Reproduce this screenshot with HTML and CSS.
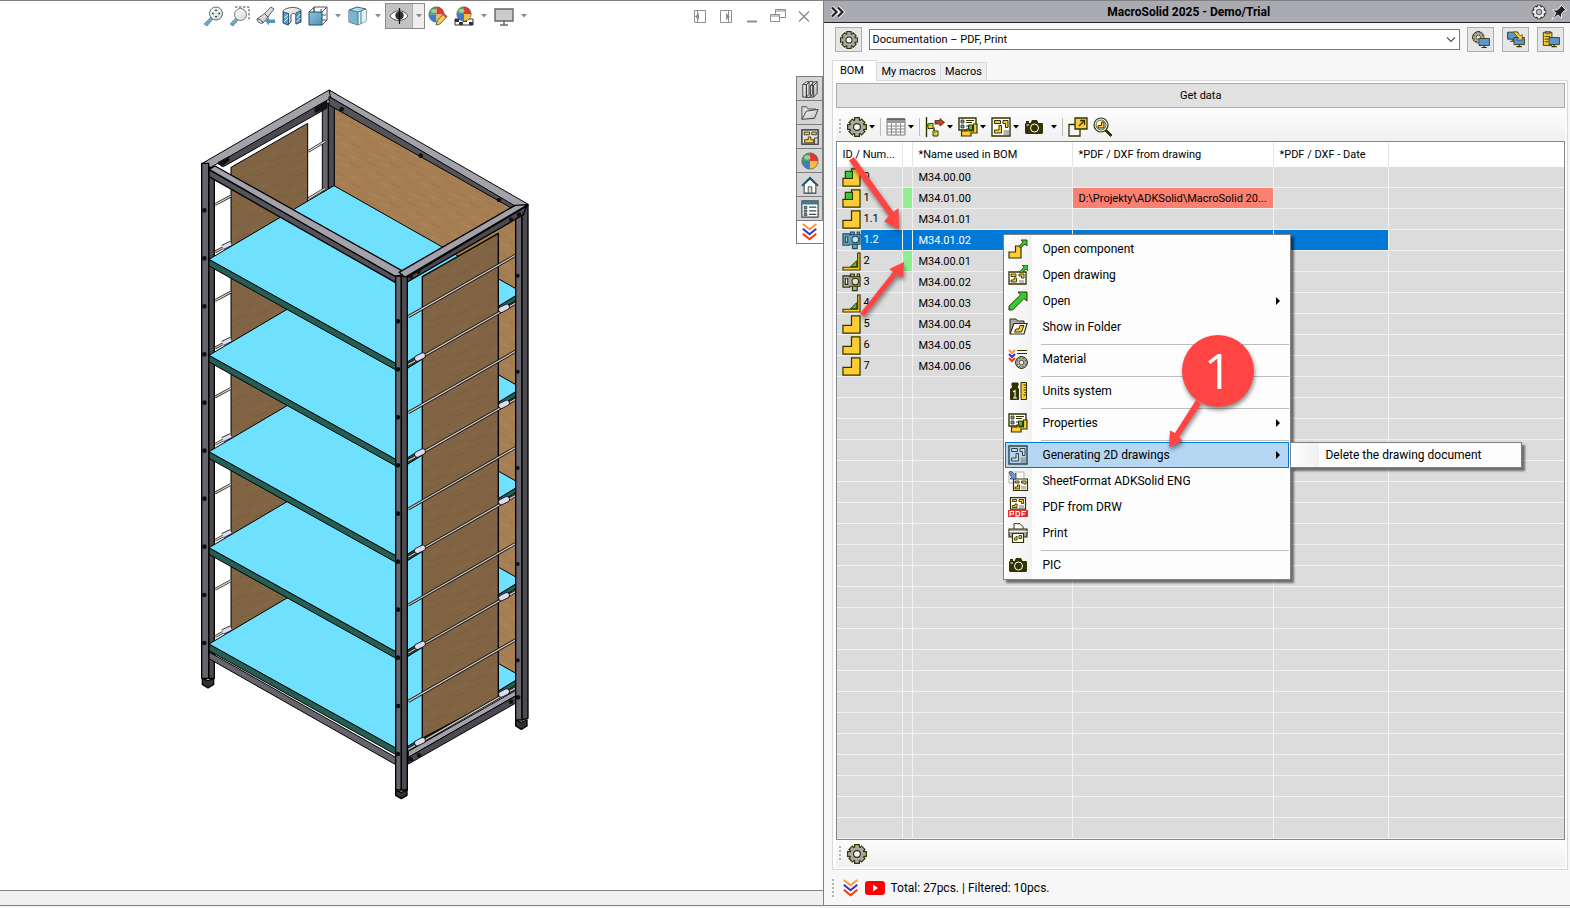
FILE: index.html
```html
<!DOCTYPE html>
<html lang="en">
<head>
<meta charset="utf-8">
<title>MacroSolid 2025 - Demo/Trial</title>
<link rel="stylesheet" href="styles.css">
</head>
<body>
<svg class="defs" aria-hidden="true">
  <defs>
    <linearGradient id="glass" x1="0" y1="0" x2="1" y2="1"><stop offset="0" stop-color="#fff"/><stop offset="1" stop-color="#c9d8de"/></linearGradient>
    <linearGradient id="steel" x1="0" y1="0" x2="1" y2="1"><stop offset="0" stop-color="#8fc3da"/><stop offset="1" stop-color="#4d94b5"/></linearGradient>
    <linearGradient id="sheet" x1="0" y1="0" x2="1" y2="1"><stop offset="0" stop-color="#fff"/><stop offset="1" stop-color="#b5b5b5"/></linearGradient>
    <symbol id="gear" viewBox="0 0 20 20">
      <g fill="#333300"><rect x="7" y="0" width="6" height="20"/><rect x="0" y="7" width="20" height="6"/><rect x="7" y="0.5" width="6" height="19" transform="rotate(45 10 10)"/><rect x="7" y="0.5" width="6" height="19" transform="rotate(-45 10 10)"/><circle cx="10" cy="10" r="7.8"/></g>
      <g fill="#a9a9a9"><rect x="8.2" y="1.2" width="3.6" height="17.6"/><rect x="1.2" y="8.2" width="17.6" height="3.6"/><rect x="8.2" y="1.7" width="3.6" height="16.6" transform="rotate(45 10 10)"/><rect x="8.2" y="1.7" width="3.6" height="16.6" transform="rotate(-45 10 10)"/><circle cx="10" cy="10" r="6.7"/></g>
      <circle cx="10" cy="10" r="3.4" fill="#f8f8f8" stroke="#333300" stroke-width="1.2"/>
    </symbol>
    <symbol id="part" viewBox="0 0 20 20"><path d="M10 1h9v18H1v-8h9z" fill="#fc3" stroke="#333300" stroke-width="1.3"/></symbol>
    <symbol id="asm" viewBox="0 0 20 20"><path d="M10 1h9v18H1v-8h9z" fill="#fc3" stroke="#333300" stroke-width="1.3"/><rect x="3.5" y="3.5" width="7.5" height="7.5" fill="#3c3" stroke="#333300" stroke-width="1.2"/></symbol>
    <symbol id="weld" viewBox="0 0 20 20"><path d="M9 15.500L15.500 9v6.500z" fill="#3c3" stroke="#333300"/><path d="M16.500 1H19v18H1v-3h15.500z" fill="#fc3" stroke="#333300" stroke-width="1.2"/></symbol>
    <symbol id="lib" viewBox="0 0 20 20"><g fill="#a9a9a9" stroke="#333300" stroke-width="1.2"><path d="M9 1h4v3H9zM16 1h2.500v3H16zM11 13h5v5.500h-5z"/><path d="M1 3h7v1h11v10H8v1H1z"/><path d="M3.500 6h2.500v6H3.500z" fill="#fff"/><circle cx="14" cy="9" r="3.500" fill="#ddd"/></g></symbol>
    <symbol id="libsel" viewBox="0 0 20 20"><g fill="#6aa0b4" stroke="#1d4f66" stroke-width="1.2"><path d="M9 1h4v3H9zM16 1h2.500v3H16zM11 13h5v5.500h-5z"/><path d="M1 3h7v1h11v10H8v1H1z"/><path d="M3.500 6h2.500v6H3.500z" fill="#bcd"/><circle cx="14" cy="9" r="3.500" fill="#cde"/></g></symbol>
    <symbol id="drawing" viewBox="0 0 20 20"><path d="M1 1h18v18H1z" fill="#fff" stroke="#333300" stroke-width="1.4"/><path d="M3.500 3.500h6v3h-6zM12 3.500h5v7h-2.500v-4H12zM8 8.500h2.500V16H3.500v-3H8z" fill="#fc3" stroke="#333300"/><path d="M12.500 13H18v5h-5.500z" fill="#b3b3b3"/></symbol>
    <symbol id="drawblue" viewBox="0 0 20 20"><path d="M1 1h18v18H1z" fill="#b5d7f3" stroke="#33443c" stroke-width="1.4"/><path d="M3.500 3.500h6v3h-6zM12 3.500h5v7h-2.500v-4H12zM8 8.500h2.500V16H3.500v-3H8z" fill="#c4dcec" stroke="#33443c"/><path d="M12.500 12.500H18V18h-5.500z" fill="#98a4b4"/></symbol>
    <symbol id="props" viewBox="0 0 20 20"><path d="M1 1h17v12H1z" fill="#fff" stroke="#333300" stroke-width="1.4"/><path d="M3 3h3v3H3zM3 8h3v3H3z" fill="#69c" stroke="#333300" stroke-width=".8"/><path d="M8 3.500h8M8 5.500h6M8 9h3" stroke="#333300"/><path d="M10.500 8h4v5h-4z" fill="#3c3" stroke="#333300"/><path d="M15.500 7H19v9h-6v3H3.500v-5H9v-2h2v2h4.500z" fill="#fc3" stroke="#333300" stroke-width="1.2"/></symbol>
    <symbol id="grid" viewBox="0 0 20 20"><path d="M1 2h18v16H1z" fill="#fff" stroke="#777"/><path d="M1 2h18v4H1z" fill="#999"/><path d="M1 2h18" stroke="#333"/><path d="M1 9h18M1 12h18M1 15h18M5.500 6v12M10 6v12M14.500 6v12" stroke="#888"/></symbol>
    <symbol id="tree" viewBox="0 0 20 20"><path d="M1.500 0v20M1.500 8.500H4M9 10.500v4" fill="none" stroke="#333300" stroke-width="1.4"/><path d="M3 6.500h5v5H3zM8 14h5v5H8z" fill="#fc3" stroke="#333300"/><path d="M3 6.500h2.500V9H3zM8 14h2.500v2.500H8z" fill="#3c3"/><path d="M10 3.500h5V1.500l4.500 4-4.500 3.500V7h-5z" fill="#d33" stroke="#333300" stroke-width=".8"/></symbol>
    <symbol id="camera" viewBox="0 0 20 20"><path d="M1.500 6h5l1.500-3h5l1.500 3h4l.5 1v9l-1 1H2l-1-1V7z" fill="#333300"/><path d="M2 4h3v2H2z" fill="#333300"/><circle cx="10.500" cy="11" r="4" fill="none" stroke="#fff"/><path d="M2.500 8h2.500" stroke="#fff"/></symbol>
    <symbol id="export" viewBox="0 0 20 20"><path d="M1 7.500h11V19H1z" fill="#f8f8f8" stroke="#333300" stroke-width="1.300"/><path d="M7 1h12v11H7z" fill="#fc3" stroke="#333300" stroke-width="1.300"/><path d="M11 9l5-5M12 3.500h4.500V8" fill="none" stroke="#333300" stroke-width="1.300"/></symbol>
    <symbol id="find" viewBox="0 0 20 20"><circle cx="8" cy="8" r="7" fill="#fff" stroke="#333300" stroke-width="1.200"/><circle cx="8" cy="8" r="5" fill="#fff" stroke="#333300" stroke-width=".8"/><path d="M8.500 5H11v6H5V8.500h3.500z" fill="#fc3" stroke="#333300"/><path d="M12 14l1.500-1.500L19 18l-1.500 1.500z" fill="#333300" stroke="#333300"/></symbol>
    <symbol id="arrowgreen" viewBox="0 0 20 20"><path d="M10 1h9v9l-3-2.500L4.500 19H1v-4L12.500 4z" fill="#3c3" stroke="#333300"/></symbol>
    <symbol id="opencomp" viewBox="0 0 20 20"><path d="M7.500 7H13v12H1v-6h6.500z" fill="#fc3" stroke="#333300" stroke-width="1.200"/><path d="M13 1h6v6l-2-2-4.500 4-1.500-1.500L15 3z" fill="#3c3" stroke="#333300" stroke-width=".9"/></symbol>
    <symbol id="opendraw" viewBox="0 0 20 20"><path d="M1 7h17v12H1z" fill="#fff" stroke="#333300" stroke-width="1.300"/><path d="M3 9h5v2.500H3zM11 9h5v4h-2.500v-2H11zM6 13h2.500v4H3v-2h3z" fill="#fc3" stroke="#333300" stroke-width=".9"/><path d="M11 15h5v3h-5z" fill="#bbb"/><path d="M14 0h6v6l-2-2-4.500 4-1.500-1.500L16 2z" fill="#3c3" stroke="#333300" stroke-width=".8"/></symbol>
    <symbol id="folder" viewBox="0 0 20 20"><path d="M2 16V2h6l1.500 2H16v12z" fill="#a9a9a9" stroke="#333300"/><path d="M2 17L6 6.500h13L16 17z" fill="#fff" stroke="#333300" stroke-width="1.200"/><path d="M12 8.500h4L13.500 15H6.500l1.500-3h3z" fill="#fc3" stroke="#333300"/></symbol>
    <symbol id="chevs" viewBox="0 0 20 20"><g fill="none" stroke-width="2.200"><path d="M2 1l7.500 6L17 1" stroke="#f93"/><path d="M2 6.500l7.500 6 7.500-6" stroke="#33c"/><path d="M2 12l7.500 6 7.500-6" stroke="#f30"/></g></symbol>
    <symbol id="material" viewBox="0 0 20 20"><g fill="none" stroke-width="2"><path d="M1 1l3 3 3-3" stroke="#f93"/><path d="M1 5l3 3 3-3" stroke="#33c"/><path d="M1 9l3 3 3-3" stroke="#f30"/></g><path d="M9 1.500h10M9 4.500h10" stroke="#333300" stroke-width="1.200"/><svg x="7" y="7" width="13" height="13"><use href="#gear"/></svg></symbol>
    <symbol id="units" viewBox="0 0 20 20"><path d="M4 2h6v3l-1 1 1.500 2v10.500h-8V8L5 6 4 5z" fill="#333300" stroke="#333300"/><path d="M5 11l2-1.500V17M5 17h4" fill="none" stroke="#fff" stroke-width="1.100"/><path d="M13 1.500h5.500v17H13z" fill="#fc3" stroke="#333300"/><path d="M15.500 4H18M16.500 6.500H18M15.500 9H18M16.500 11.500H18M15.500 14H18" stroke="#333300"/></symbol>
    <symbol id="format" viewBox="0 0 20 20"><path d="M1 1h15v11H1z" fill="#f8f8f8" stroke="#b0b0b0"/><path d="M5.500 8h14v11.500h-14z" fill="#fff" stroke="#333300" stroke-width="1.200"/><path d="M7 10h4v2H7zM13.500 10H18v3h-2v-1h-2.500zM9.500 14h2v4H7v-2h2.500z" fill="#fc3" stroke="#333300" stroke-width=".9"/><path d="M13 15h5v3.500h-5z" fill="#bbb"/><path d="M1 1l2-1 3.500 3.500L8 2v6H2l1.500-1.500z" fill="#69c" stroke="#235" stroke-width=".7"/></symbol>
    <symbol id="pdf" viewBox="0 0 20 20"><path d="M2.500 .7h15v11.500h-15z" fill="#fff" stroke="#333300" stroke-width="1.200"/><path d="M4.500 2.500h4v2h-4zM11 2.500h4.500v4h-2v-2H11zM7 7h2v3.500H4.500V8.500H7z" fill="#fc3" stroke="#333300" stroke-width=".9"/><path d="M11 8h5v3h-5z" fill="#bbb"/><path d="M0 13h20v7H0z" fill="#d33"/><path d="M2 19v-4.500h3.500V17H2M8 14.500h2.500l1 1V18l-1 1H8zM14 19v-4.500h4M14 17h3" fill="none" stroke="#fff" stroke-width="1.100"/></symbol>
    <symbol id="print" viewBox="0 0 20 20"><path d="M6 6V.7h6l3 3V6" fill="#fff" stroke="#333300"/><path d="M1 6h18v8H1z" fill="#a9a9a9" stroke="#333300" stroke-width="1.200"/><path d="M1 8.500h18" stroke="#eee"/><path d="M4.500 10.500h11v9h-11z" fill="#fff" stroke="#333300" stroke-width="1.200"/><path d="M9 13v4H6.500v-2zM11 12.500h2.500v3H11z" fill="#fc3" stroke="#333300" stroke-width=".9"/></symbol>
    <symbol id="screen" viewBox="0 0 20 20"><path d="M1 2h18v12H1z" fill="#5b97cf" stroke="#333300" stroke-width="1.500"/><path d="M10 14v3M5.500 17.500h9" stroke="#333300" stroke-width="2"/></symbol>
    <symbol id="gearscreen" viewBox="0 0 20 20"><svg width="14" height="14"><use href="#gear"/></svg><svg x="7" y="7" width="13" height="13"><use href="#screen"/></svg></symbol>
    <symbol id="copyscreen" viewBox="0 0 20 20"><svg width="13" height="13"><use href="#screen"/></svg><svg x="7" y="6" width="13" height="13"><use href="#screen"/></svg><path d="M7 1h4l4 4.500L17 4v6h-6l2-2z" fill="#fc3" stroke="#333300" stroke-width=".7"/></symbol>
    <symbol id="clipscreen" viewBox="0 0 20 20"><path d="M1.500 1.500H11V16H1.500z" fill="#fc3" stroke="#333300"/><path d="M4 0h5v3H4z" fill="#888" stroke="#333300" stroke-width=".7"/><path d="M3 6h6M3 9h5M3 12h4" stroke="#333300"/><svg x="7" y="6" width="13" height="13"><use href="#screen"/></svg></symbol>
    <symbol id="ball" viewBox="0 0 20 20"><path d="M10 10V1a9 9 0 0 0-9 9z" fill="#43a84f"/><path d="M10 10H1a9 9 0 0 0 9 9z" fill="#3f79d8"/><path d="M10 10V1a9 9 0 0 1 9 9z" fill="#e8352d"/><path d="M10 10h9a9 9 0 0 1-9 9z" fill="#f2c23c"/><circle cx="10" cy="10" r="9" fill="none" stroke="#555" stroke-width=".8"/><ellipse cx="7" cy="6" rx="3.500" ry="2.500" fill="#fff" opacity=".45"/></symbol>
    <symbol id="zoomfit" viewBox="0 0 20 20"><path d="M7 11l2 2-6 7-3-2z" fill="url(#steel)" stroke="#4b7d94" stroke-width=".7"/><circle cx="12" cy="7.500" r="6.500" fill="url(#glass)" stroke="#666"/><path d="M12 3l1.500 2h-3zM12 12l1.500-2h-3zM7.500 7.500l2-1.500v3zM16.500 7.500l-2-1.500v3z" fill="#444"/></symbol>
    <symbol id="zoomarea" viewBox="0 0 20 20"><path d="M5 1h14v14" fill="none" stroke="#444" stroke-dasharray="2.500 1.500"/><path d="M6 12l2 2-5 6-3-2z" fill="url(#steel)" stroke="#4b7d94" stroke-width=".7"/><circle cx="10.500" cy="8.500" r="6" fill="url(#glass)" stroke="#777"/></symbol>
    <symbol id="torch" viewBox="0 0 20 20"><path d="M15 1l3 2-6 8-5 6c-3 1-6-1-6-4l7-5z" fill="url(#sheet)" stroke="#555" stroke-width=".9"/><path d="M8 7l4 4M1 13c2 0 5 1 6 4" fill="none" stroke="#555"/><path d="M9 15l4-4v2.500h6v3.500h-6v2.500z" fill="#5794b2"/></symbol>
    <symbol id="section" viewBox="0 0 20 20"><path d="M1 5c3-4 14-5 18-1v12l-5 2V9c-1-2-4-2-5 0v7l-3 3-5-2z" fill="url(#sheet)" stroke="#444" stroke-width=".9"/><path d="M1.500 6l5 1.500V19l-5-2zM14 7l4.500-2v11L14 18z" fill="#5b9fc4" stroke="#2c5d78"/><path d="M2 12l4-3M2 16l4-4M14.500 12l4-4M14.500 16l4-4" stroke="#d8eef8"/></symbol>
    <symbol id="views" viewBox="0 0 20 20"><path d="M6 1h13v13H6zM1 6l5-5M14 19l5-5M14 6l5-5M6 1v6M13 3v12M6 9h12" fill="none" stroke="#555"/><path d="M1 6h13v13H1z" fill="url(#steel)" stroke="#1f5069"/></symbol>
    <symbol id="cube" viewBox="0 0 20 20"><path d="M1 4l8-3 9 2v12l-8 4-9-3z" fill="#aee0f4" stroke="#555"/><path d="M1 4l9 2v13l-9-3z" fill="#79b5d1"/><path d="M10 6l8-3v12l-8 4z" fill="#d9f2fb"/><path d="M1 4l9 2 8-3M10 6v13M13 5v13" fill="none" stroke="#49798f"/></symbol>
    <symbol id="eye" viewBox="0 0 20 20"><path d="M1 10c4-7 14-7 18 0-4 6-14 6-18 0z" fill="#fff" stroke="#555"/><circle cx="10.500" cy="9.500" r="4.200" fill="#333"/><path d="M10.500 2v16" stroke="#111" stroke-width="1.200"/></symbol>
    <symbol id="ballpen" viewBox="0 0 20 20"><svg width="17" height="17"><use href="#ball"/></svg><path d="M8 19l1.500-4.500 6-7 3.500 3-7 7.500z" fill="#f4cf5a" stroke="#444" stroke-width=".8"/><path d="M15 8l3.500 3" stroke="#c44" stroke-width="2"/></symbol>
    <symbol id="ballscene" viewBox="0 0 20 20"><path d="M1 13h18v6H1z" fill="#fff" stroke="#333"/><path d="M1 13h4v3H1zM9 13h4v3H9zM15 16h4v3h-4zM5 16h4v3H5z" fill="#333"/><svg x="2" width="16" height="16"><use href="#ball"/></svg></symbol>
    <symbol id="monitor" viewBox="0 0 20 20"><path d="M1 3h18v12H1z" fill="#c9cbcd" stroke="#666" stroke-width="1.400"/><path d="M10 15v3.500M6 19h8" stroke="#666" stroke-width="1.500"/></symbol>
    <symbol id="books" viewBox="0 0 20 20"><g fill="url(#sheet)" stroke="#333"><path d="M2 5l4-3h3v14l-3 3H2zM6 5.500l4-4h3v14l-3 4H6zM10.500 6l4-4L18 2v13l-4 4h-3.500z"/><path d="M2 5h4l3-3M6 5v14M10.500 6H14l4-4M14 6v13" fill="none"/></g></symbol>
    <symbol id="openfolder" viewBox="0 0 20 20"><path d="M1 17V3h5l2 2.500h8V8" fill="#ddd" stroke="#444"/><path d="M1 17L6 8l13-2-4 10z" fill="url(#sheet)" stroke="#444" stroke-width="1.100"/></symbol>
    <symbol id="palette" viewBox="0 0 20 20"><path d="M1 2h18v16H1z" fill="#e4e4e4" stroke="#222" stroke-width="1.400"/><path d="M3.500 4.500h6v3h-6zM12 4.500h5v3h-5zM8 10h3v3h3v3.500H4V13h4z" fill="#fc3" stroke="#222" stroke-width=".9"/><path d="M15 11h4v7h-4z" fill="#ccc" stroke="#444"/></symbol>
    <symbol id="home" viewBox="0 0 20 20"><path d="M3.500 9L10 3.500 16.500 9v10h-13z" fill="#fff" stroke="#444" stroke-width="1.200"/><path d="M8 12h4v7H8z" fill="#ddd" stroke="#444"/><path d="M1 11l9-9 9 9" fill="none" stroke="#1d5878" stroke-width="2.200"/></symbol>
    <symbol id="listwin" viewBox="0 0 20 20"><path d="M1 1h18v18H1z" fill="#fff" stroke="#444" stroke-width="1.300"/><path d="M1 1h18v4H1z" fill="#3d7b9d"/><path d="M3.500 7h3v2.500h-3zM3.500 11h3v2.500h-3zM3.500 15h3v2.500h-3z" fill="#5b9fc4" stroke="#333" stroke-width=".8"/><path d="M9 8h8M9 12h8M9 16h8" stroke="#444" stroke-width="1.300"/></symbol>
    <symbol id="caret" viewBox="0 0 6 4"><path d="M0 0h6L3 3.500z"/></symbol>
  </defs>
</svg>

<div class="app">
  <main class="viewport">
    <div class="viewbar">
      <div class="viewtools">
        <button aria-label="Zoom to fit"><svg><use href="#zoomfit"/></svg></button>
        <button aria-label="Zoom to area"><svg><use href="#zoomarea"/></svg></button>
        <button aria-label="Previous view"><svg><use href="#torch"/></svg></button>
        <button aria-label="Section view"><svg><use href="#section"/></svg></button>
        <button aria-label="View orientation"><svg><use href="#views"/></svg></button>
        <button class="drop" aria-label="Orientation options"><svg><use href="#caret"/></svg></button>
        <button aria-label="Display style"><svg><use href="#cube"/></svg></button>
        <button class="drop" aria-label="Display options"><svg><use href="#caret"/></svg></button>
        <span class="pressed"><button aria-label="Hide or show items"><svg><use href="#eye"/></svg></button><button class="drop" aria-label="Visibility options"><svg><use href="#caret"/></svg></button></span>
        <button aria-label="Edit appearance"><svg><use href="#ballpen"/></svg></button>
        <button aria-label="Apply scene"><svg><use href="#ballscene"/></svg></button>
        <button class="drop" aria-label="Scene options"><svg><use href="#caret"/></svg></button>
        <button aria-label="View settings"><svg><use href="#monitor"/></svg></button>
        <button class="drop" aria-label="View settings options"><svg><use href="#caret"/></svg></button>
      </div>
      <div class="wintools">
        <button aria-label="Dock left"><svg viewBox="0 0 16 16"><path d="M2.500 2.500h11v12h-11zM5.500 2.500v12" /><path class="solid" d="M3 8.500L7 5v7z"/></svg></button>
        <button aria-label="Dock right"><svg viewBox="0 0 16 16"><path d="M2.500 2.500h11v12h-11zM10.500 2.500v12" /><path class="solid" d="M12 8.500L8 5v7z"/></svg></button>
        <button aria-label="Minimize"><svg viewBox="0 0 16 16"><path d="M3 13.500h10" stroke-width="2"/></svg></button>
        <button aria-label="Restore"><svg viewBox="0 0 16 16"><path d="M.5 6.500h9v7h-9zM.5 8h9M5.500 6V1.500h10v8h-6M5.500 3h10"/></svg></button>
        <button aria-label="Close"><svg viewBox="0 0 16 16"><path d="M3 3.500l10 10M13 3.500l-10 10" stroke-width="1.500"/></svg></button>
      </div>
    </div>
    <div class="stage">
      <svg class="model" viewBox="0 0 1050 2190" role="img" aria-label="Shelving rack model">
        <defs>
          <pattern id="woodlight" width="120" height="60" patternUnits="userSpaceOnUse"><rect width="120" height="60" fill="#a67e53"/><path d="M0 8l34 17M46 2l40 20M20 34l36 18M80 36l34 17" stroke="#94672f" stroke-width="2" opacity=".6"/><path d="M60 40l30 15M4 48l20 10M90 8l28 14" stroke="#b78e60" stroke-width="3" opacity=".6"/></pattern>
          <pattern id="wooddark" width="120" height="60" patternUnits="userSpaceOnUse"><rect width="120" height="60" fill="#806444"/><path d="M0 25l30-14M44 20l36-17M24 56l34-16M76 50l36-17" stroke="#70501f" stroke-width="2" opacity=".5"/><path d="M60 34l26-12M4 44l22-10M94 20l22-10" stroke="#8f7050" stroke-width="3" opacity=".6"/></pattern>
          <g id="shelf" stroke="#000" stroke-width="3" stroke-linejoin="round">
            <path d="M57 538L632 858v20L57 558z" fill="#245f55"/><path d="M632 858L995 636v14L632 878z" fill="#245f55"/><path d="M432 317L995 636 632 858 57 538z" fill="#70e0ff"/>
          </g>
          <g id="rod"><path d="M655 710L990 518" stroke="#111" stroke-width="9"/><path d="M655 710L990 518" stroke="#cfcbc2" stroke-width="4"/></g>
          <g id="rodclip"><use href="#rod" y="144"/><path d="M682 835l16-8M934 689l16-8" stroke="#222" stroke-width="19" stroke-linecap="round"/><path d="M682 835l16-8M934 689l16-8" stroke="#dcdcf4" stroke-width="14" stroke-linecap="round"/></g>
          <g id="lrod"><path d="M75 374l48-26M75 516l48-26" stroke="#111" stroke-width="8"/><path d="M75 374l48-26M75 516l48-26" stroke="#d8d4cc" stroke-width="4"/><path d="M98 502l25-12" stroke="#222" stroke-width="16"/><path d="M98 502l25-12" stroke="#dcdcf4" stroke-width="11"/></g>
          <g id="bolts" fill="#111"><circle cx="43" cy="391" r="7"/><circle cx="43" cy="535" r="7"/><circle cx="624" cy="724" r="7"/><circle cx="624" cy="868" r="7"/><circle cx="983" cy="587" r="6"/></g>
        </defs>
        <g stroke="#000" stroke-width="3" stroke-linejoin="round">
          <path d="M432 75L977 385V1850L432 1550z" fill="url(#woodlight)"/>
          <path d="M397 70h18v300h-18z" fill="#66646c"/><path d="M415 70h18v300h-18z" fill="#4c4a50"/>
          <path d="M355 214l50-30M355 356l50-30" stroke="#111" stroke-width="8"/><path d="M355 214l50-30M355 356l50-30" stroke="#d8d4cc" stroke-width="4"/>
          <path d="M123 262L353 130V1600L123 1660z" fill="url(#wooddark)"/>
        </g>
        <use href="#lrod"/><use href="#lrod" y="288"/><use href="#lrod" y="577"/><use href="#lrod" y="865"/><use href="#lrod" y="1154"/>
        <path d="M56 262h17V1795H56z" fill="#4c4a50" stroke="#000" stroke-width="4"/>
        <path d="M57 1716L617 2032v22L57 1736z" fill="#66646c" stroke="#000" stroke-width="3"/>
        <use href="#shelf" y="1154"/><use href="#shelf" y="865"/><use href="#shelf" y="577"/><use href="#shelf" y="288"/><use href="#shelf"/>
        <g stroke="#000" stroke-width="3" stroke-linejoin="round">
          <path d="M655 2014L990 1824v16L655 2032z" fill="#a3a2ab"/><path d="M655 2032L990 1840v22L655 2052z" fill="#4c4a50"/>
          <path d="M697 590L925 460V1855L697 1975z" fill="url(#wooddark)" stroke-width="4"/>
          <path d="M410 55V85L100 260 78 248z" fill="#4c4a50"/><path d="M417 30L440 44 62 262 37 250z" fill="#a3a2ab"/>
          <path d="M417 50L975 368V390L417 75z" fill="#56545b"/><path d="M417 30L1015 373 982 382 422 52z" fill="#a3a2ab"/>
        </g>
        <use href="#rod"/><use href="#rod" y="288"/><use href="#rod" y="577"/><use href="#rod" y="865"/><use href="#rod" y="1154"/>
        <use href="#rodclip"/><use href="#rodclip" y="288"/><use href="#rodclip" y="577"/><use href="#rodclip" y="865"/><use href="#rodclip" y="1154"/>
        <g stroke="#000" stroke-width="4" stroke-linejoin="round">
          <path d="M37 1795l17 7 17-7v18l-17 11-17-11zM617 2130l17 7 17-7v16l-17 10-17-10zM977 1920l17 7 17-7v18l-17 10-17-10z" fill="#33322a"/>
          <path d="M35 250h21V1795H35z" fill="#66646c"/>
          <path d="M977 395h19V1920h-19z" fill="#66646c"/><path d="M996 385l18-10V1915l-18 5z" fill="#4c4a50"/>
          <path d="M57 268L617 588v20L57 290z" fill="#56545b"/><path d="M75 258L650 580 617 590 57 268z" fill="#a3a2ab"/>
          <path d="M652 592L1010 378 1000 404 652 606z" fill="#4c4a50"/><path d="M627 577L975 376 1014 374 645 592z" fill="#a3a2ab"/>
          <path d="M617 588h17V2130h-17z" fill="#66646c"/><path d="M634 590h18V2130h-18z" fill="#4c4a50"/>
        </g>
        <use href="#bolts"/><use href="#bolts" y="288"/><use href="#bolts" y="577"/><use href="#bolts" y="865"/><use href="#bolts" y="1154"/>
        <g fill="#111"><path d="M374 82l38-20v22l-38 16zM84 246l34-18v14l-24 18z"/><circle cx="455" cy="88" r="7"/><circle cx="692" cy="227" r="7"/><circle cx="927" cy="360" r="7"/><circle cx="987" cy="404" r="7"/><circle cx="963" cy="418" r="6"/><circle cx="663" cy="590" r="6"/><circle cx="686" cy="576" r="6"/><circle cx="663" cy="2038" r="7"/><circle cx="687" cy="2026" r="7"/><circle cx="963" cy="1865" r="7"/><circle cx="984" cy="1852" r="7"/></g>
      </svg>
      <nav class="sidetabs" aria-label="Task pane">
        <button aria-label="Design library"><svg><use href="#books"/></svg></button>
        <button aria-label="File explorer"><svg><use href="#openfolder"/></svg></button>
        <button aria-label="View palette"><svg><use href="#palette"/></svg></button>
        <button aria-label="Appearances"><svg><use href="#ball"/></svg></button>
        <button aria-label="Resources"><svg><use href="#home"/></svg></button>
        <button aria-label="Custom properties"><svg><use href="#listwin"/></svg></button>
        <button class="current" aria-label="MacroSolid"><svg><use href="#chevs"/></svg></button>
      </nav>
    </div>
    <div class="viewstatus"></div>
  </main>

  <aside class="panel">
    <header class="titlebar">
      <button aria-label="Collapse"><svg viewBox="0 0 16 16"><path d="M2 3.500l4.500 4.500L2 12.500M8 3.500l4.500 4.500L8 12.500" fill="none" stroke="#f4f4f4" stroke-width="4"/><path d="M2 3.500l4.500 4.500L2 12.500M8 3.500l4.500 4.500L8 12.500" fill="none" stroke="#222" stroke-width="2.200"/></svg></button>
      <h1>MacroSolid 2025 - Demo/Trial</h1>
      <button aria-label="Options"><svg viewBox="0 0 20 20"><g fill="none" stroke="#333" stroke-width="5"><circle cx="10" cy="10" r="6"/><path d="M10 1v4M10 15v4M1 10h4M15 10h4M4 4l2 2M14 14l2 2M16 4l-2 2M6 14l-2 2"/></g><g fill="#eee" stroke="#eee" stroke-width="3"><circle cx="10" cy="10" r="5"/><path d="M10 2v3M10 15v3M2 10h3M15 10h3M4.500 4.500l2 2M13.500 13.500l2 2M15.500 4.500l-2 2M6.500 13.500l-2 2"/></g><circle cx="10" cy="10" r="3.500" fill="#bbb" stroke="#333"/></svg></button>
      <button aria-label="Pin"><svg viewBox="0 0 16 16"><path d="M10 1l5.500 5.500-2.500.5-2.500 3v4L7 11 1 15.500 5 9 1.500 6H6l3-2.500z" fill="#222" stroke="#f4f4f4" stroke-width=".9"/></svg></button>
    </header>
    <div class="pick">
      <button class="square" aria-label="Settings"><svg><use href="#gear"/></svg></button>
      <div class="combo">
        <select aria-label="Macro set"><option>Documentation – PDF, Print</option></select>
        <svg viewBox="0 0 10 6"><path d="M1 .5l4 4 4-4" fill="none" stroke="#555" stroke-width="1.200"/></svg>
      </div>
      <button class="square" aria-label="Screen settings"><svg><use href="#gearscreen"/></svg></button>
      <button class="square" aria-label="Copy screen"><svg><use href="#copyscreen"/></svg></button>
      <button class="square" aria-label="Paste screen"><svg><use href="#clipscreen"/></svg></button>
    </div>
    <div class="tabs" role="tablist">
      <button role="tab" aria-selected="true" class="on">BOM</button><button role="tab">My macros</button><button role="tab">Macros</button>
    </div>
    <section class="page">
      <button class="getdata">Get data</button>
      <div class="strip">
        <i class="grip"></i>
        <button aria-label="Options"><svg><use href="#gear"/></svg><svg class="dd"><use href="#caret"/></svg></button>
        <i class="vline"></i>
        <button aria-label="Columns"><svg><use href="#grid"/></svg><svg class="dd"><use href="#caret"/></svg></button>
        <i class="vline"></i>
        <button aria-label="Tree"><svg><use href="#tree"/></svg><svg class="dd"><use href="#caret"/></svg></button>
        <button aria-label="Properties"><svg><use href="#props"/></svg><svg class="dd"><use href="#caret"/></svg></button>
        <button aria-label="Drawing"><svg><use href="#drawing"/></svg><svg class="dd"><use href="#caret"/></svg></button>
        <button class="wide" aria-label="Picture"><svg><use href="#camera"/></svg><svg class="dd"><use href="#caret"/></svg></button>
        <i class="vline"></i>
        <button aria-label="Export"><svg><use href="#export"/></svg></button>
        <button aria-label="Find"><svg><use href="#find"/></svg></button>
      </div>
      <div class="tablebox">
        <table>
          <colgroup><col class="c1"><col class="c2"><col class="c3"><col class="c4"><col class="c5"><col></colgroup>
          <thead><tr><th>ID / Num...</th><th></th><th>*Name used in BOM</th><th>*PDF / DXF from drawing</th><th>*PDF / DXF - Date</th><th></th></tr></thead>
          <tbody>
            <tr><td><svg><use href="#asm"/></svg>0</td><td></td><td>M34.00.00</td><td></td><td></td><td></td></tr>
            <tr><td><svg><use href="#asm"/></svg>1</td><td class="green"></td><td>M34.01.00</td><td class="red">D:\Projekty\ADKSolid\MacroSolid 20...</td><td></td><td></td></tr>
            <tr><td><svg><use href="#part"/></svg>1.1</td><td></td><td>M34.01.01</td><td></td><td></td><td></td></tr>
            <tr class="sel"><td><svg><use href="#libsel"/></svg>1.2</td><td></td><td>M34.01.02</td><td></td><td></td><td></td></tr>
            <tr><td><svg><use href="#weld"/></svg>2</td><td class="green"></td><td>M34.00.01</td><td></td><td></td><td></td></tr>
            <tr><td><svg><use href="#lib"/></svg>3</td><td></td><td>M34.00.02</td><td></td><td></td><td></td></tr>
            <tr><td><svg><use href="#weld"/></svg>4</td><td></td><td>M34.00.03</td><td></td><td></td><td></td></tr>
            <tr><td><svg><use href="#part"/></svg>5</td><td></td><td>M34.00.04</td><td></td><td></td><td></td></tr>
            <tr><td><svg><use href="#part"/></svg>6</td><td></td><td>M34.00.05</td><td></td><td></td><td></td></tr>
            <tr><td><svg><use href="#part"/></svg>7</td><td></td><td>M34.00.06</td><td></td><td></td><td></td></tr>
            <tr><td><td><td><td><td><td></tr><tr><td><td><td><td><td><td></tr>
            <tr><td><td><td><td><td><td></tr><tr><td><td><td><td><td><td></tr>
            <tr><td><td><td><td><td><td></tr><tr><td><td><td><td><td><td></tr>
            <tr><td><td><td><td><td><td></tr><tr><td><td><td><td><td><td></tr>
            <tr><td><td><td><td><td><td></tr><tr><td><td><td><td><td><td></tr>
            <tr><td><td><td><td><td><td></tr><tr><td><td><td><td><td><td></tr>
            <tr><td><td><td><td><td><td></tr><tr><td><td><td><td><td><td></tr>
            <tr><td><td><td><td><td><td></tr><tr><td><td><td><td><td><td></tr>
            <tr><td><td><td><td><td><td></tr><tr><td><td><td><td><td><td></tr>
            <tr><td><td><td><td><td><td></tr><tr><td><td><td><td><td><td></tr>
            <tr><td><td><td><td><td><td></tr><tr><td><td><td><td><td><td></tr>
          </tbody>
        </table>
      </div>
      <div class="strip">
        <i class="grip"></i>
        <button aria-label="Table settings"><svg><use href="#gear"/></svg></button>
      </div>
    </section>
    <footer class="status">
      <i class="grip"></i>
      <svg class="logo"><use href="#chevs"/></svg>
      <a href="#" aria-label="Video channel"><svg viewBox="0 0 20 14"><rect width="20" height="14" rx="3" fill="red"/><path d="M8 3.500L13 7l-5 3.500z" fill="#fff"/></svg></a>
      <span>Total: 27pcs. | Filtered: 10pcs.</span>
    </footer>

    <div class="menu" role="menu">
      <button role="menuitem"><svg><use href="#opencomp"/></svg>Open component</button>
      <button role="menuitem"><svg><use href="#opendraw"/></svg>Open drawing</button>
      <button role="menuitem" class="more"><svg><use href="#arrowgreen"/></svg>Open</button>
      <button role="menuitem"><svg><use href="#folder"/></svg>Show in Folder</button>
      <hr>
      <button role="menuitem"><svg><use href="#material"/></svg>Material</button>
      <hr>
      <button role="menuitem"><svg><use href="#units"/></svg>Units system</button>
      <hr>
      <button role="menuitem" class="more"><svg><use href="#props"/></svg>Properties</button>
      <hr>
      <button role="menuitem" class="more hot"><svg><use href="#drawblue"/></svg>Generating 2D drawings</button>
      <button role="menuitem"><svg><use href="#format"/></svg>SheetFormat ADKSolid ENG</button>
      <button role="menuitem"><svg><use href="#pdf"/></svg>PDF from DRW</button>
      <button role="menuitem"><svg><use href="#print"/></svg>Print</button>
      <hr>
      <button role="menuitem"><svg><use href="#camera"/></svg>PIC</button>
    </div>
    <div class="menu submenu" role="menu"><button role="menuitem">Delete the drawing document</button></div>

    <svg class="marks" viewBox="824 1 746 600" aria-hidden="true">
      <g fill="#ff4444">
        <path d="M849 160.500L854 157 893.500 212 898.500 208 899 229.500 884 221.500 889 216z"/>
        <path d="M860 313.500L893 272 889.500 269 904 262 903 277.500 897 275 864 316.500z"/>
        <path d="M1196 400L1175 433 1170 430.500 1169 447.500 1182.500 441 1179 437 1201 404z"/>
        <circle cx="1218" cy="371" r="36"/>
      </g>
      <text x="1218" y="389">1</text>
    </svg>
  </aside>
</div>
</body>
</html>
```
FILE: styles.css
```css
* { box-sizing: border-box; }
body { margin: 0; background: #f4f4f4; color: #000; font-family: Roboto, "Noto Sans", sans-serif; font-size: 12px; }
button { margin: 0; padding: 0; border: 0; background: none; color: inherit; font: inherit; }
svg { display: block; overflow: visible; }
.defs { position: absolute; width: 0; height: 0; }

.app { display: flex; height: calc(100vh - 2px); border-top: 1px solid #808080; border-bottom: 1px solid #808080; }

/* model viewport */
.viewport { flex: 824 1 0; min-width: 0; display: flex; flex-direction: column; background: #fff; }
.viewbar { display: flex; justify-content: space-between; padding: 2px 6px 0 201px; }
.viewtools { display: flex; align-items: center; height: 26px; }
.viewtools button { display: grid; place-items: center; width: 26px; height: 24px; }
.viewtools svg { width: 20px; height: 20px; }
.viewtools .drop { width: 14px; }
.viewtools .drop svg { width: 6px; height: 4px; fill: #8a8a8a; }
.pressed { display: flex; height: 26px; border: 1px solid #8a8a8a; background: #c3c3c3; }
.pressed .drop { width: 12px; background: #eee; border-left: 1px solid #aaa; }
.wintools { display: flex; }
.wintools button { display: grid; place-items: center; width: 26px; height: 26px; }
.wintools svg { width: 16px; height: 16px; fill: none; stroke: #8f8f8f; }
.wintools .solid { fill: #8f8f8f; stroke: none; }
.stage { flex: 1; min-height: 0; display: flex; justify-content: space-between; padding-top: 47px; overflow: hidden; }
.model { width: 350px; height: 730px; margin: 4px 0 0 190px; flex: none; }
.sidetabs { width: 27px; }
.sidetabs button { display: grid; place-items: center; width: 27px; height: 24px; border: 1px solid #7c7c7c; border-bottom: 0; background: #d5d5d5; }
.sidetabs svg { width: 18px; height: 18px; }
.sidetabs .current { background: #fff; border-bottom: 1px solid #7c7c7c; border-right: 0; }
.viewstatus { height: 15px; border-top: 1px solid #808080; background: #f0f0f0; }

/* task pane */
.panel { position: relative; flex: 746 1 0; min-width: 0; display: flex; flex-direction: column; border-left: 1px solid #808080; background: #f7f7f7; }
.titlebar { display: flex; align-items: center; gap: 4px; height: 22px; padding: 0 3px 0 6px; background: #a9abb0; border-bottom: 1px solid #222; }
.titlebar svg { width: 16px; height: 16px; }
.titlebar h1 { flex: 1; margin: 0; text-align: center; font-size: 12px; line-height: 20px; font-weight: 700; }
.pick { display: flex; align-items: center; gap: 8px; padding: 4px 6px 0 11px; }
.square { display: grid; place-items: center; width: 27px; height: 25px; border: 1px solid #adadad; background: #e6e6e6; }
.square svg { width: 18px; height: 18px; }
.combo { position: relative; flex: 1; margin: 0 -1px; }
.combo select { display: block; appearance: none; width: 100%; height: 21px; padding: 0 2px; border: 1px solid #7a7a7a; border-radius: 0; background: #fff; color: #000; font-family: inherit; font-size: 11px; }
.combo svg { position: absolute; right: 4px; top: 8px; width: 10px; height: 6px; }
.tabs { display: flex; align-items: flex-end; height: 28px; padding-left: 8px; font-size: 11px; }
.tabs button { height: 18px; padding: 0 4px; border: 1px solid #d9d9d9; border-left: 0; border-bottom: 0; background: #f0f0f0; }
.tabs .on { position: relative; height: 21px; width: 45px; padding: 0 12px 2px 6px; margin-bottom: -1px; border-left: 1px solid #d9d9d9; background: #fff; }
.page { flex: 1; min-height: 0; display: flex; flex-direction: column; margin: 0 2px 0 8px; padding: 2px 2px 2px 3px; border: 1px solid #d9d9d9; background: #fcfcfc; }
.getdata { height: 25px; border: 1px solid #adadad; background: #e1e1e1; font-size: 11px; }
.strip { display: flex; align-items: center; height: 27px; padding-left: 2px; background: linear-gradient(#fcfcfc, #f0f0f0); }
.getdata + .strip { height: 28px; margin-top: 5px; }
.grip { width: 2px; height: 16px; margin: 0 6px 0 1px; background: repeating-linear-gradient(#b5b5b5 0 2px, transparent 2px 4px); }
.strip button { display: flex; align-items: center; gap: 2px; margin-right: 5px; }
.strip button svg { width: 20px; height: 20px; }
.strip .wide { gap: 7px; }
.strip button svg.dd { width: 6px; height: 4px; }
.vline { width: 1px; height: 18px; margin-right: 5px; background: #bdbdbd; }
.tablebox { flex: 1; min-height: 0; overflow: hidden; border: 1px solid #828790; background: #dcdcdc; }
table { width: 100%; table-layout: fixed; border-collapse: separate; border-spacing: 0; font-size: 11px; }
.c1 { width: 66px; } .c2 { width: 10px; } .c3 { width: 160px; } .c4 { width: 201px; } .c5 { width: 115px; }
th { height: 25px; padding: 0 0 0 5px; background: #fff; border-right: 1px solid #e5e5e5; font-weight: 400; text-align: left; white-space: nowrap; }
td { height: 21px; padding: 0 0 0 5px; border-right: 1px solid #f2f2f2; border-bottom: 1px solid #f2f2f2; background: #dcdcdc; white-space: nowrap; }
th:nth-child(2), td:nth-child(2) { padding: 0; }
th:last-child, td:last-child { border-right: 0; }
td svg { display: inline-block; vertical-align: middle; width: 19px; height: 19px; margin-right: 2px; }
tbody td:first-child { line-height: 19px; }
td.green { background: #90ee90; }
td.red { background: #fa8072; }
.sel td { background: #0078d7; color: #fff; }
.sel td:first-child { background: linear-gradient(to right, #dcdcdc 24px, #0078d7 24px); }
.sel td:last-child { background: #dcdcdc; }
.status { display: flex; align-items: center; height: 35px; padding-left: 7px; }
.status .grip { margin-right: 8px; height: 18px; }
.status .logo { width: 18px; height: 18px; margin-right: 5px; }
.status a svg { width: 20px; height: 14px; margin-right: 5px; }

/* context menu */
.menu { position: absolute; left: 179px; top: 233px; width: 288px; padding: 1px; border: 1px solid #808080; background: linear-gradient(to right, #fdfdfd, #f1f1f1 28px, #fdfdfd 28px); box-shadow: 3px 3px 2px rgba(0, 0, 0, .5); }
.menu button { display: flex; align-items: center; width: 100%; height: 26px; padding-left: 2px; text-align: left; border: 1px solid transparent; }
.menu button svg { width: 20px; height: 20px; margin-right: 14px; }
.menu .more::after { content: ""; margin: 0 8px 0 auto; border: 4px solid transparent; border-left-color: #000; border-right: 0; }
.menu .hot { background: #b5d7f3; border-color: #0078d7; }
.menu hr { height: 1px; margin: 4px 0 1px 36px; border: 0; background: #bdbdbd; }
.submenu { left: 466px; top: 441px; width: 232px; padding: 0; }
.submenu button { height: 24px; padding-left: 33px; }

/* callouts */
.marks { position: absolute; left: 0; top: 0; width: 746px; height: 600px; pointer-events: none; filter: drop-shadow(1px 3px 2px rgba(0, 0, 0, .45)); }
.marks text { fill: #fff; font-family: "Open Sans", sans-serif; font-size: 50px; font-weight: 400; text-anchor: middle; }
```
